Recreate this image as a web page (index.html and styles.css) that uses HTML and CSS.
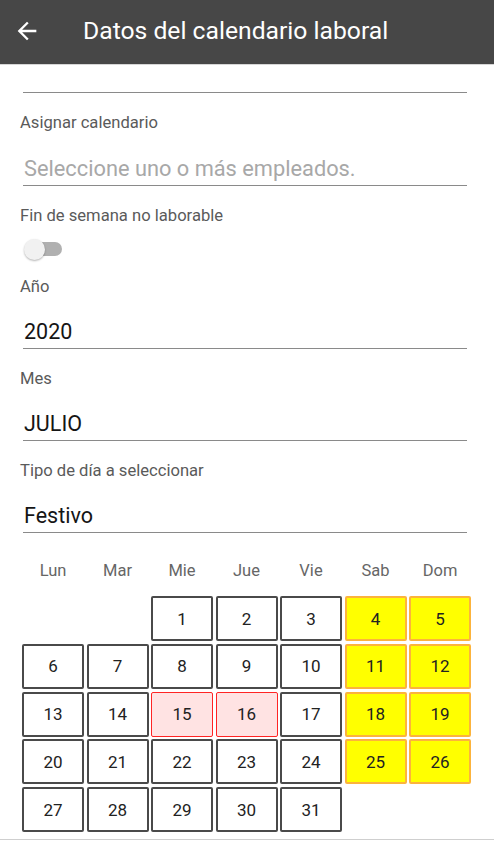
FILE: index.html
```html
<!DOCTYPE html>
<html lang="es">
<head>
<meta charset="utf-8">
<title>Datos del calendario laboral</title>
<link rel="stylesheet" href="styles.css">
</head>
<body>
<header class="appbar">
  <svg class="back" viewBox="0 0 24 24" width="28" height="28"><path d="M20 11H7.83l5.59-5.59L12 4l-8 8 8 8 1.41-1.41L7.83 13H20v-2z" fill="#fff"/></svg>
  <h1 class="title">Datos del calendario laboral</h1>
</header>
<main class="content">
  <div class="input topline"></div>

  <div class="field">
    <div class="label">Asignar calendario</div>
    <div class="input placeholder">Seleccione uno o más empleados.</div>
  </div>

  <div class="field">
    <div class="label">Fin de semana no laborable</div>
    <div class="switch"><span class="track"></span><span class="thumb"></span></div>
  </div>

  <div class="field field-after-switch">
    <div class="label">Año</div>
    <div class="input">2020</div>
  </div>

  <div class="field">
    <div class="label">Mes</div>
    <div class="input">JULIO</div>
  </div>

  <div class="field">
    <div class="label">Tipo de día a seleccionar</div>
    <div class="input">Festivo</div>
  </div>

  <div class="calendar">
    <div class="dow">Lun</div><div class="dow">Mar</div><div class="dow">Mie</div><div class="dow">Jue</div><div class="dow">Vie</div><div class="dow">Sab</div><div class="dow">Dom</div>
  </div>
  <div class="days">
    <div class="empty"></div><div class="empty"></div>
    <div class="day">1</div><div class="day">2</div><div class="day">3</div><div class="day we">4</div><div class="day we">5</div>
    <div class="day">6</div><div class="day">7</div><div class="day">8</div><div class="day">9</div><div class="day">10</div><div class="day we">11</div><div class="day we">12</div>
    <div class="day">13</div><div class="day">14</div><div class="day hol">15</div><div class="day hol">16</div><div class="day">17</div><div class="day we">18</div><div class="day we">19</div>
    <div class="day">20</div><div class="day">21</div><div class="day">22</div><div class="day">23</div><div class="day">24</div><div class="day we">25</div><div class="day we">26</div>
    <div class="day">27</div><div class="day">28</div><div class="day">29</div><div class="day">30</div><div class="day">31</div>
  </div>
</main>
<div class="bottombar"></div>
</body>
</html>
```

FILE: styles.css
```css
html, body {
  margin: 0;
  padding: 0;
  background: #ffffff;
  font-family: Roboto, "Noto Sans", "Liberation Sans", sans-serif;
}

.appbar {
  height: 64px;
  background: #474747;
  display: flex;
  align-items: center;
  box-shadow: 0 1px 0 #d6d6d6;
}

.back {
  margin-left: 13px;
  margin-top: -3px;
  flex: none;
}

.title {
  margin: -3px 0 0 42px;
  font-size: 24.7px;
  font-weight: 400;
  color: #ffffff;
}

.content {
  padding: 0 27px 0 20px;
}

.field {
  margin-top: 19px;
}

.field-after-switch {
  margin-top: 17px;
}

.label {
  font-size: 16.6px;
  line-height: 22px;
  color: #5a5a5a;
}

.input {
  margin-left: 3px;
  margin-top: 21px;
  font-size: 21.5px;
  line-height: 26px;
  padding-left: 1px;
  padding-bottom: 3px;
  color: #151515;
  border-bottom: 1.4px solid #8a8a8a;
}

.input.topline {
  margin-top: 28px;
  height: 0;
  padding: 0;
}

.input.placeholder {
  color: #a8a8a8;
  font-size: 21.8px;
  margin-top: 22px;
}

.switch {
  margin-top: 12px;
  margin-left: 4px;
  width: 40px;
  height: 20px;
  display: flex;
  align-items: center;
  position: relative;
}

.track {
  display: block;
  margin-left: 4px;
  width: 34px;
  height: 14px;
  border-radius: 7px;
  background: #b0b0b0;
}

.thumb {
  position: absolute;
  left: 0;
  top: 0;
  width: 21px;
  height: 21px;
  border-radius: 50%;
  background: #f1f1f1;
  box-shadow: 0 1px 2px rgba(0,0,0,0.3);
}

.calendar {
  margin-top: 27px;
  margin-left: 2px;
  width: 449px;
  display: grid;
  grid-template-columns: repeat(7, 1fr);
  column-gap: 2.5px;
}

.dow {
  text-align: center;
  font-size: 16.5px;
  line-height: 22px;
  color: #666666;
}

.days {
  margin-top: 14px;
  margin-left: 2px;
  width: 449px;
  display: grid;
  grid-template-columns: repeat(7, 1fr);
  grid-auto-rows: 45px;
  column-gap: 2.5px;
  row-gap: 2.75px;
}

.day {
  box-sizing: border-box;
  border: 2px solid #4a4a4a;
  border-radius: 2px;
  display: flex;
  align-items: center;
  justify-content: center;
  font-size: 17px;
  color: #222222;
  background: #ffffff;
}

.day.we {
  background: #ffff00;
  border: 2px solid #fcb33c;
}

.day.hol {
  background: #ffe3e3;
  border: 1.5px solid #ff2424;
}

.bottombar {
  margin-top: 7px;
  border-top: 1.5px solid #cfcfcf;
}
```
